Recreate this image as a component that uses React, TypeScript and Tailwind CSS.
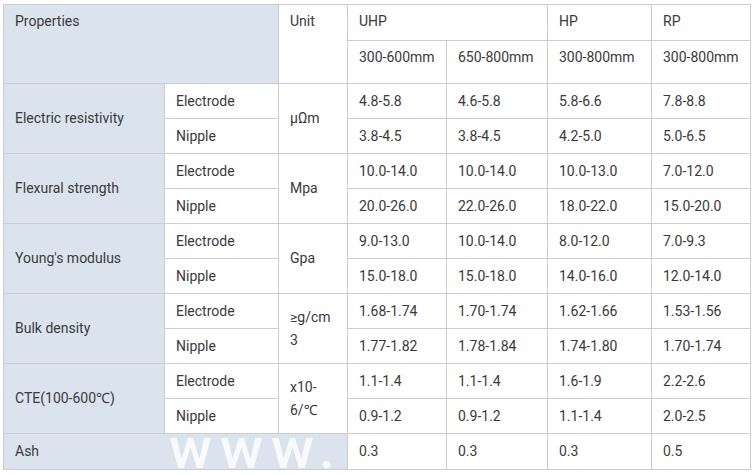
import React from "react";

type Row = {
  name: string;
  unit: React.ReactNode;
  electrode: string[];
  nipple: string[];
};

const rows: Row[] = [
  {
    name: "Electric resistivity",
    unit: "μΩm",
    electrode: ["4.8-5.8", "4.6-5.8", "5.8-6.6", "7.8-8.8"],
    nipple: ["3.8-4.5", "3.8-4.5", "4.2-5.0", "5.0-6.5"],
  },
  {
    name: "Flexural strength",
    unit: "Mpa",
    electrode: ["10.0-14.0", "10.0-14.0", "10.0-13.0", "7.0-12.0"],
    nipple: ["20.0-26.0", "22.0-26.0", "18.0-22.0", "15.0-20.0"],
  },
  {
    name: "Young's modulus",
    unit: "Gpa",
    electrode: ["9.0-13.0", "10.0-14.0", "8.0-12.0", "7.0-9.3"],
    nipple: ["15.0-18.0", "15.0-18.0", "14.0-16.0", "12.0-14.0"],
  },
  {
    name: "Bulk density",
    unit: (
      <>
        ≥g/cm
        <br />3
      </>
    ),
    electrode: ["1.68-1.74", "1.70-1.74", "1.62-1.66", "1.53-1.56"],
    nipple: ["1.77-1.82", "1.78-1.84", "1.74-1.80", "1.70-1.74"],
  },
  {
    name: "CTE(100-600℃)",
    unit: (
      <>
        x10-
        <br />
        6/℃
      </>
    ),
    electrode: ["1.1-1.4", "1.1-1.4", "1.6-1.9", "2.2-2.6"],
    nipple: ["0.9-1.2", "0.9-1.2", "1.1-1.4", "2.0-2.5"],
  },
];

const cell = "border-r border-b border-[#cdcdcd] px-[11px]";
const head = `${cell} pt-[5px]`;
const body = `${cell} flex items-center`;
const blue = "bg-[#dbe4ee]";

export default function App() {
  return (
    <div className="min-h-screen bg-white pl-[3px] pt-[4px]">
      <div className="relative w-[748px]">
        <div
          className="grid grid-cols-[161px_114px_69px_99px_101px_104px_99px] grid-rows-[36px_43px_repeat(10,35px)_36px] border-l border-t border-[#cdcdcd] text-[14px] leading-[23px] text-[#3a3a3a]"
          style={{ fontFamily: 'Roboto, "Noto Sans", "DejaVu Sans", sans-serif' }}
        >
          {/* header */}
          <div className={`${head} ${blue} col-span-2 row-span-2`}>Properties</div>
          <div className={`${head} row-span-2`}>Unit</div>
          <div className={`${head} col-span-2`}>UHP</div>
          <div className={head}>HP</div>
          <div className={head}>RP</div>
          <div className={head}>300-600mm</div>
          <div className={head}>650-800mm</div>
          <div className={head}>300-800mm</div>
          <div className={head}>300-800mm</div>

          {rows.map((r) => (
            <React.Fragment key={r.name}>
              <div className={`${body} ${blue} row-span-2`}>{r.name}</div>
              <div className={body}>Electrode</div>
              <div className={`${body} row-span-2`}>
                <span>{r.unit}</span>
              </div>
              {r.electrode.map((v, i) => (
                <div key={"e" + i} className={body}>
                  {v}
                </div>
              ))}
              <div className={body}>Nipple</div>
              {r.nipple.map((v, i) => (
                <div key={"n" + i} className={body}>
                  {v}
                </div>
              ))}
            </React.Fragment>
          ))}

          <div className={`${body} ${blue} col-span-3`}>Ash</div>
          <div className={body}>0.3</div>
          <div className={body}>0.3</div>
          <div className={body}>0.3</div>
          <div className={body}>0.5</div>
        </div>

        {/* watermark */}
        <div
          aria-hidden="true"
          className="pointer-events-none absolute left-[166px] top-[426px] h-[36px] select-none whitespace-nowrap text-[58px] font-medium leading-[36px] tracking-[8px] text-white/80"
          style={{ fontFamily: 'Roboto, "Liberation Sans", sans-serif' }}
        >
          www.
        </div>
      </div>
    </div>
  );
}
